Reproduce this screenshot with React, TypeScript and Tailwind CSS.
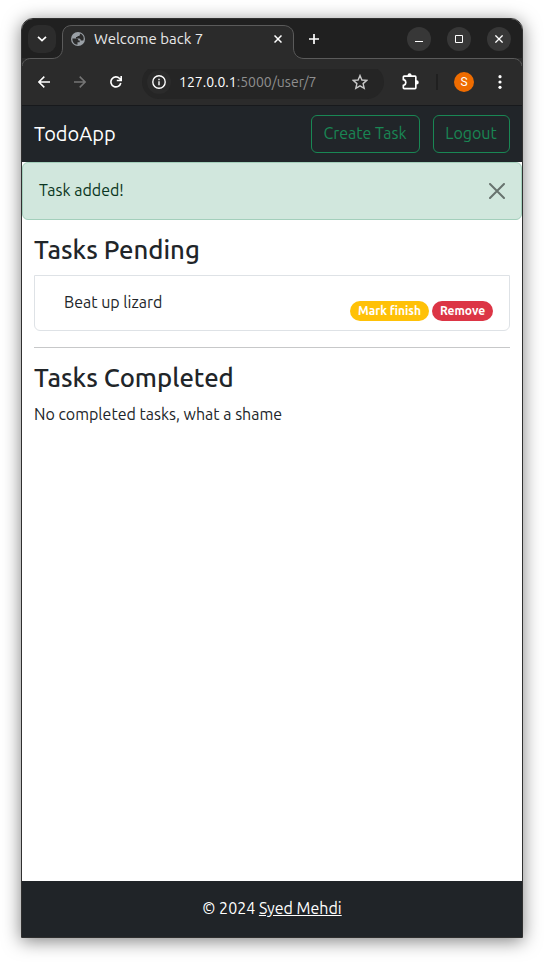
import type { ReactNode } from "react";

function RoundButton({ children }: { children: ReactNode }) {
  return (
    <button className="flex size-6 items-center justify-center rounded-full bg-[#373737] text-white">
      {children}
    </button>
  );
}

function TabStrip() {
  return (
    <div className="relative h-[39px] bg-[#202020]">
      <svg className="absolute top-0 left-0" width="500" height="50" viewBox="0 0 500 50" fill="none">
        <path
          d="M0 50V47C0.5 42.500 4 39.500 9 39.500H30C36.500 39.500 40.500 35.500 40.500 29V16C40.500 10 44 6.500 50 6.500H261C267 6.500 271.500 10 271.500 16V29C271.500 35.500 276 39.500 282 39.500H491C496 39.500 499.500 42.500 500 47V50Z"
          fill="#2b2b2b"
        />
        <path
          d="M0 47C0.5 42.500 4 39.500 9 39.500H30C36.500 39.500 40.500 35.500 40.500 29V16C40.500 10 44 6.500 50 6.500H261C267 6.500 271.500 10 271.500 16V29C271.500 35.500 276 39.500 282 39.500H491C496 39.500 499.500 42.500 500 47"
          stroke="#5b5b5b"
        />
      </svg>
      <div className="relative flex h-10 items-center pr-[11px] pl-1.5 text-white">
        <button className="flex size-7 items-center justify-center rounded-[10px] bg-[#2c2c2c]">
          <svg width="10" height="6" viewBox="0 0 10 6" fill="none" stroke="white" strokeWidth="1.7">
            <path d="M1 0.8L5 4.600L9 0.8" />
          </svg>
        </button>
        <div className="ml-[15px] flex w-[222px] items-center">
          <svg width="14" height="14" viewBox="0 0 14 14">
            <circle cx="7" cy="7" r="7" fill="#9aa0a6" />
            <path
              d="M1.400 6.400H4.600C6.800 6.400 7.400 7.300 7.400 8.600H8.700V10.300H6.500V12.700C3.500 12.500 1.200 10 1.400 6.400ZM8.900 1.500V2.700C8.900 3.700 8 4 6.500 3.900V5.100H5V6.400H8.200C9.300 6.400 9.700 7.300 9.700 8.600H12.300C13.500 5.600 12.200 2.500 8.900 1.500Z"
              fill="#2b2b2b"
            />
          </svg>
          <span className="ml-[9px] flex-1 text-[15px] leading-5 whitespace-nowrap text-[#e8e8e8]">Welcome back 7</span>
          <svg className="mr-[11px]" width="8" height="8" viewBox="0 0 8 8" stroke="white" strokeWidth="1.500">
            <path d="M0.5 0.5L7.500 7.500M7.500 0.5L0.5 7.500" />
          </svg>
        </div>
        <svg className="ml-[16px]" width="10" height="10" viewBox="0 0 10 10" stroke="white" strokeWidth="1.700">
          <path d="M5 0V10M0 5H10" />
        </svg>
        <div className="ml-auto flex gap-4">
          <RoundButton>
            <svg width="8" height="8" viewBox="0 0 8 8" fill="white"><path d="M0 6H8V7H0Z" /></svg>
          </RoundButton>
          <RoundButton>
            <svg width="8" height="8" viewBox="0 0 8 8" fill="none" stroke="white"><path d="M0.5 0.5H7.500V7.500H0.5Z" /></svg>
          </RoundButton>
          <RoundButton>
            <svg width="8" height="8" viewBox="0 0 8 8" stroke="white" strokeWidth="1.300"><path d="M0.4 0.4L7.600 7.600M7.600 0.4L0.4 7.600" /></svg>
          </RoundButton>
        </div>
      </div>
    </div>
  );
}

function Toolbar() {
  return (
    <div className="flex h-[48px] items-center border-b border-[#17191c] bg-[#2b2b2b] pl-4 text-white">
      <svg width="12" height="12" viewBox="0 0 12 12" fill="none" stroke="white" strokeWidth="1.500">
        <path d="M12 6H1M6.300 0.6L0.9 6L6.300 11.400" />
      </svg>
      <svg className="ml-6" width="12" height="12" viewBox="0 0 12 12" fill="none" stroke="#757575" strokeWidth="1.500">
        <path d="M0 6H11M5.700 0.6L11.100 6L5.700 11.400" />
      </svg>
      <svg className="ml-6" width="12" height="12" viewBox="0 0 12 12" fill="none" stroke="white" strokeWidth="1.600">
        <path d="M10.800 7A5 5 0 1 1 9.600 2.500L11 4M11.200 0V4.500H6.800" />
      </svg>
      <div className="ml-[20px] flex h-[34px] w-[242px] items-center rounded-full bg-[#252525] pl-[5px]">
        <span className="flex size-6 items-center justify-center rounded-full bg-[#2b2b2b]">
          <svg width="14" height="14" viewBox="0 0 14 14" fill="none" stroke="white" strokeWidth="1.400">
            <circle cx="7" cy="7" r="6.200" />
            <path d="M7 6.200V10.200M7 3.700V5.200" />
          </svg>
        </span>
        <span className="ml-[8px] flex-1 text-[14px] leading-5 whitespace-nowrap text-white">
          127.0.0.1<span className="text-[#8f8f8f]">:5000/user/7</span>
        </span>
        <svg className="mr-4" width="16" height="16" viewBox="0 0 16 16" fill="none" stroke="#c7c7c7" strokeWidth="1.400">
          <path d="M8 1.500L9.900 6L14.800 6.400L11.100 9.600L12.200 14.300L8 11.800L3.800 14.300L4.900 9.600L1.200 6.400L6.100 6Z" />
        </svg>
      </div>
      <svg className="ml-4" width="20" height="20" viewBox="0 0 24 24" fill="white" fillRule="evenodd">
        <path d="M5 21Q3 21 3 19V15.200Q6 14.800 6 12.500T3 9.800V6Q3 4 5 4H9Q9.200 1.500 11.500 1.500T14 4H18Q20 4 20 6V10Q22.500 10.200 22.500 12.500T20 15V19Q20 21 18 21ZM5 19H18V6H5V8.100Q8 9.200 8 12.500T5 16.900Z" />
      </svg>
      <span className="ml-[16px] h-4 w-[2px] bg-[#202020]" />
      <span className="ml-[16px] flex size-5 items-center justify-center rounded-full bg-[#ef6c00] font-[Roboto,sans-serif] text-[12px] leading-none">S</span>
      <svg className="ml-[24px]" width="4" height="14" viewBox="0 0 4 14" fill="white">
        <circle cx="2" cy="1.700" r="1.600" />
        <circle cx="2" cy="7" r="1.600" />
        <circle cx="2" cy="12.300" r="1.600" />
      </svg>
    </div>
  );
}

export default function App() {
  return (
    <div className="h-[962px] w-[544px] overflow-hidden bg-white px-[21px] pt-[18px] font-[Ubuntu,'Noto_Sans',sans-serif] text-[#212529]">
      <div className="flex h-[920px] w-[502px] flex-col overflow-hidden rounded-t-[12px] border border-[#303030] bg-white shadow-[0_3px_18px_rgba(0,0,0,0.5)]">
        <TabStrip />
        <Toolbar />
        <nav className="flex h-14 shrink-0 items-center bg-[#212529] px-3">
          <span className="text-[20px] leading-[30px] text-white">TodoApp</span>
          <button className="ml-auto h-[38px] w-[109px] rounded-md border border-[#198754] pr-[1px] pb-0.5 text-[16px] leading-6 whitespace-nowrap text-[#198754]">Create Task</button>
          <button className="ml-[13px] h-[38px] w-[77px] rounded-md border border-[#198754] pr-[1px] pb-0.5 text-[16px] leading-6 text-[#198754]">Logout</button>
        </nav>
        <div className="flex h-[58px] shrink-0 items-center justify-between rounded-md border border-[#a3cfbb] bg-[#d1e7dd] px-4">
          <span className="pb-0.5 text-[16px] leading-6 text-[#0a3622]">Task added!</span>
          <svg width="16" height="16" viewBox="0 0 16 16" stroke="#68736e" strokeWidth="2" strokeLinecap="round">
            <path d="M1 1L15 15M15 1L1 15" />
          </svg>
        </div>
        <main className="flex-1 px-3 pt-[14px]">
          <h2 className="text-[25.7px] leading-[31px] font-medium whitespace-nowrap">Tasks Pending</h2>
          <div className="mt-[10px] flex h-[56px] justify-between rounded-b-md border border-[#dee2e6] pr-4 pl-[29px]">
            <span className="pt-[14px] text-[16px] leading-6">Beat up lizard</span>
            <div className="flex gap-[3px] pt-[25px] text-[12px] leading-5 font-bold whitespace-nowrap text-white">
              <button className="h-5 w-[79px] rounded-full bg-[#ffc107]">Mark finish</button>
              <button className="h-5 w-[61px] rounded-full bg-[#dc3545]">Remove</button>
            </div>
          </div>
          <hr className="mt-4 border-[#c7c8c9]" />
          <h2 className="mt-[14px] text-[25.7px] leading-[31px] font-medium whitespace-nowrap">Tasks Completed</h2>
          <p className="mt-[9px] text-[16px] leading-6 whitespace-nowrap">No completed tasks, what a shame</p>
        </main>
        <footer className="flex h-14 shrink-0 items-center justify-center bg-[#202428] pb-0.5 text-[16px] text-white">
          <span className="whitespace-nowrap">© 2024 <a className="underline">Syed Mehdi</a></span>
        </footer>
      </div>
    </div>
  );
}
